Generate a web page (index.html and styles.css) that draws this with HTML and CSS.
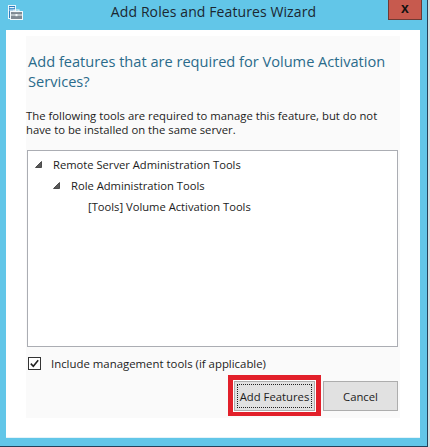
FILE: index.html
```html
<!DOCTYPE html>
<html>
<head>
<meta charset="utf-8">
<link rel="stylesheet" href="styles.css">
</head>
<body>
<div class="window">
  <div class="titlebar">
    <div class="tb-left">
      <svg class="app-icon" width="17" height="17" viewBox="0 0 17 17">
        <rect x="1.5" y="0.5" width="7" height="13" fill="#2f7fc0" stroke="#e8f6fc" stroke-width="1"/>
        <rect x="2.5" y="2" width="5" height="1.2" fill="#e8f6fc"/>
        <rect x="2.5" y="4.5" width="5" height="1.2" fill="#e8f6fc"/>
        <rect x="3.5" y="6.5" width="12" height="8" fill="#7f8a93" stroke="#f2f9fc" stroke-width="1"/>
        <rect x="7" y="5" width="5" height="1.6" fill="none" stroke="#f2f9fc" stroke-width="1"/>
        <rect x="4" y="9.5" width="11" height="1" fill="#f2f9fc"/>
        <rect x="8.5" y="9" width="2" height="2.2" fill="#f2f9fc"/>
      </svg>
    </div>
    <div class="title">Add Roles and Features Wizard</div>
    <div class="tb-right">
      <div class="close-btn">x</div>
    </div>
  </div>
  <div class="client">
    <div class="panel">
      <h1 class="heading">Add features that are required for Volume Activation Services?</h1>
      <p class="desc">The following tools are required to manage this feature, but do not have to be installed on the same server.</p>
      <div class="tree">
        <div class="row lvl1"><svg class="tri" width="7" height="7" viewBox="0 0 7 7"><polygon points="6.5,0.5 6.5,6.5 0.5,6.5" fill="#595959" stroke="#333" stroke-width="0.8"/></svg><span>Remote Server Administration Tools</span></div>
        <div class="row lvl2"><svg class="tri" width="7" height="7" viewBox="0 0 7 7"><polygon points="6.5,0.5 6.5,6.5 0.5,6.5" fill="#595959" stroke="#333" stroke-width="0.8"/></svg><span>Role Administration Tools</span></div>
        <div class="row lvl3"><span>[Tools] Volume Activation Tools</span></div>
      </div>
      <div class="check-row">
        <span class="checkbox"><svg width="11" height="11" viewBox="0 0 11 11"><polyline points="1.8,5.6 4.3,8.2 9.2,2.2" fill="none" stroke="#222" stroke-width="1.6"/></svg></span>
        <span class="check-label">Include management tools (if applicable)</span>
      </div>
      <div class="buttons">
        <span class="highlight"><button class="btn btn-add"><span class="focus">Add Features</span></button></span>
        <button class="btn btn-cancel">Cancel</button>
      </div>
    </div>
  </div>
</div>
</body>
</html>
```

FILE: styles.css
```css
html, body {
  margin: 0;
  padding: 0;
}
body {
  width: 430px;
  height: 447px;
  background: #d9dde0;
  overflow: hidden;
  font-family: "Open Sans", "Noto Sans", sans-serif;
}
.window {
  width: 427px;
  height: 446px;
  background: #62c6e8;
  border-right: 1px solid #24415a;
  border-bottom: 1px solid #24415a;
  display: flex;
  flex-direction: column;
}
.titlebar {
  height: 30px;
  display: grid;
  grid-template-columns: 1fr auto 1fr;
  align-items: start;
}
.tb-left {
  padding: 5px 0 0 7px;
}
.app-icon {
  display: block;
}
.title {
  font-size: 14px;
  line-height: 18px;
  padding-top: 3px;
  color: #1b2730;
  letter-spacing: 0.1px;
}
.tb-right {
  display: flex;
  justify-content: flex-end;
  padding-right: 5px;
}
.close-btn {
  width: 32px;
  height: 19px;
  background: #c75a4e;
  border: 1px solid #6e3a34;
  border-top: none;
  color: #111;
  font-family: "Liberation Sans", Arial, sans-serif;
  font-weight: bold;
  font-size: 14px;
  line-height: 16px;
  text-align: center;
}
.client {
  margin: 0 7px 8px 6px;
  height: 408px;
  background: #ffffff;
  border-bottom: 1px solid #e4f3f9;
  box-sizing: border-box;
  padding: 6px 20px 20px 20px;
}
.panel {
  height: 382px;
  background: #fafafa;
  display: flex;
  flex-direction: column;
}
.heading {
  margin: 16px 0 0 2px;
  font-weight: normal;
  font-size: 14.6px;
  line-height: 19.5px;
  color: #2a6b8b;
  width: 370px;
}
.desc {
  margin: 18px 0 0 0;
  font-size: 11.3px;
  line-height: 14px;
  color: #1c1c1c;
  width: 364px;
}
.tree {
  margin: 13px 2px 0 1px;
  height: 197px;
  box-sizing: border-box;
  border: 1px solid #abadb3;
  background: #fff;
  padding-top: 3px;
}
.row {
  height: 21px;
  display: flex;
  align-items: center;
  font-size: 11.2px;
  color: #1c1c1c;
}
.tri {
  display: block;
  margin-right: 11px;
}
.lvl1 { padding-left: 7px; }
.lvl2 { padding-left: 25px; }
.lvl3 { padding-left: 60px; }
.check-row {
  margin: 10px 0 0 2px;
  display: flex;
  align-items: center;
  height: 13px;
}
.checkbox {
  width: 11px;
  height: 11px;
  border: 1px solid #333;
  background: #fff;
  display: flex;
  align-items: center;
  justify-content: center;
  margin-right: 10px;
}
.checkbox svg { display: block; }
.check-label {
  font-size: 11.4px;
  color: #1c1c1c;
}
.buttons {
  margin-top: 5px;
  display: flex;
  justify-content: flex-end;
  align-items: flex-start;
  padding-right: 2px;
  gap: 2px;
}
.highlight {
  display: block;
  border: 5px solid #e2202a;
  border-bottom-width: 4px;
  padding: 1px;
  background: #fff;
}
.btn {
  display: block;
  height: 30px;
  margin: 0;
  box-sizing: border-box;
  background: #e1e1e1;
  border: 1px solid #adadad;
  font-family: "Open Sans", "Noto Sans", sans-serif;
  font-size: 11.3px;
  color: #1c1c1c;
  padding: 0;
}
.btn-add {
  width: 81px;
  padding: 2px;
}
.focus {
  display: flex;
  align-items: center;
  justify-content: center;
  height: 100%;
  box-sizing: border-box;
  border: 1px dotted #222;
}
.btn-cancel {
  width: 75px;
  margin-top: 6px;
}
```
